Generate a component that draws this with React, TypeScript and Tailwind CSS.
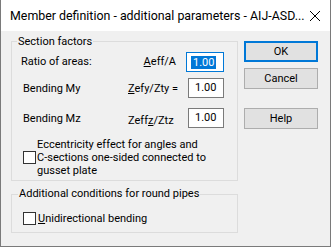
import React from "react";

const Check = () => (
  <div className="w-[13px] h-[13px] shrink-0 bg-white border border-[#333]" />
);

const ValueBox = ({ focused, className }: { focused?: boolean; className: string }) => (
  <div
    className={`h-[20px] shrink-0 bg-white flex items-center ${className} ${
      focused ? "border border-[#0078d7] pl-[4px]" : "border border-[#7a7a7a] pl-[5px]"
    }`}
  >
    {focused ? (
      <span className="bg-[#0078d7] text-white leading-[13px] px-[2px]">1.00</span>
    ) : (
      <span className="px-[1px]">1.00</span>
    )}
  </div>
);

const Btn = ({ label, primary, className }: { label: string; primary?: boolean; className?: string }) => (
  <div
    className={`w-[74px] h-[21px] bg-[#e1e1e1] flex items-center justify-center ${className ?? ""} ${
      primary ? "border-2 border-[#0078d7]" : "border border-[#adadad]"
    }`}
  >
    {label}
  </div>
);

export default function App() {
  return (
    <div className="w-[331px] h-[247px] bg-[#f0f0f0] border-x border-b border-[#7a7a7a] flex flex-col text-[11px] leading-[14px] text-black font-['Roboto',_sans-serif]">
      {/* title bar */}
      <div className="h-[31px] bg-white flex items-center pl-[9px] pr-[9px] shrink-0">
        <span className="text-[12.4px] whitespace-nowrap">
          Member definition - additional parameters - AIJ-ASD...
        </span>
        <svg className="ml-auto" width="12" height="12" viewBox="0 0 12 12">
          <path d="M1 1 L11 11 M11 1 L1 11" stroke="#000" strokeWidth="1" />
        </svg>
      </div>

      <div className="flex pl-[10px] pt-[3px]">
        <div className="w-[227px] flex flex-col">
          <fieldset className="border border-[#dcdcdc] pb-[3px]">
            <legend className="ml-[5px] px-[1px] leading-[15px]">Section factors</legend>
            <div className="flex items-center h-[20px] mt-[3px] pl-[9px] pr-[13px]">
              <span className="flex-1">Ratio of areas:</span>
              <span className="mr-[10px]">
                <span className="underline">A</span>eff/A
              </span>
              <ValueBox focused className="w-[38px]" />
            </div>
            <div className="flex items-center h-[20px] mt-[6px] pl-[11px] pr-[13px]">
              <span className="w-[105px] shrink-0 pt-[2px]">Bending My</span>
              <span className="pt-[2px]">
                <span className="underline">Z</span>efy/Zty =
              </span>
              <ValueBox className="w-[36px] ml-auto" />
            </div>
            <div className="flex items-center h-[20px] mt-[10px] pl-[11px] pr-[13px]">
              <span className="w-[105px] shrink-0 pt-[2px]">Bending Mz</span>
              <span className="pt-[5px]">
                Zeff<span className="underline">z</span>/Ztz
              </span>
              <ValueBox className="w-[36px] ml-auto" />
            </div>
            <div className="flex items-center mt-[10px] pl-[11px] gap-[1px]">
              <Check />
              <span className="leading-[13px] whitespace-nowrap">
                Eccentricity effect for angles and
                <br />
                C-sections one-sided connected to
                <br />
                gusset plate
              </span>
            </div>
          </fieldset>

          <fieldset className="border border-[#dcdcdc] pb-[7px] mt-[6px]">
            <legend className="ml-[6px] px-[1px] leading-[14px]">Additional conditions for round pipes</legend>
            <div className="flex items-center h-[14px] mt-[10px] pl-[11px] gap-[2px]">
              <Check />
              <span className="pt-[1px]">
                <span className="underline">U</span>nidirectional bending
              </span>
            </div>
          </fieldset>
        </div>

        <div className="flex flex-col pl-[6px] pt-[7px]">
          <Btn label="OK" primary />
          <Btn label="Cancel" className="mt-[6px]" />
          <Btn label="Help" className="mt-[19px]" />
        </div>
      </div>
    </div>
  );
}
